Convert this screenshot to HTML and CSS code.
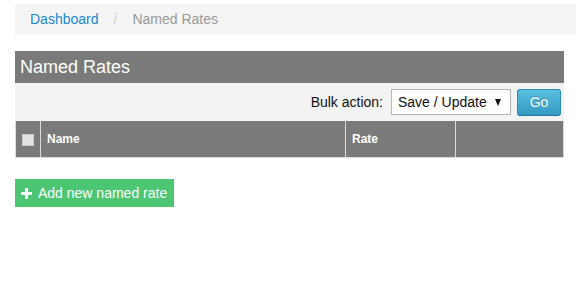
FILE: index.html
```html
<!DOCTYPE html>
<html>
<head>
  <title>Named Rates</title>
  <link rel="stylesheet" href="styles.css">
</head>
<body>

<div class="page">
  <ul class="breadcrumb">
    <li><a href="#">Dashboard</a></li>
    <li class="divider">/</li>
    <li class="active">Named Rates</li>
  </ul>

  <div class="panel">
    <h2 class="panel-title">Named Rates</h2>

    <div class="toolbar">
      <label for="bulkAction">Bulk action:</label>
      <div class="select-wrap">
        <select id="bulkAction">
          <option>Save / Update</option>
          <option>Delete</option>
        </select>
      </div>
      <button class="btn-go">Go</button>
    </div>

    <table class="rates">
      <thead>
        <tr>
          <th class="col-check"><span class="check"></span></th>
          <th class="col-name">Name</th>
          <th class="col-rate">Rate</th>
          <th class="col-actions"></th>
        </tr>
      </thead>
    </table>
  </div>

  <button class="btn-add">
    <svg width="11" height="11" viewBox="0 0 11 11"><path d="M4 0h3v4h4v3H7v4H4V7H0V4h4z" fill="#fff"/></svg>
    Add new named rate
  </button>
</div>

</body>
</html>
```

FILE: styles.css
```css
body {
  margin: 0;
  font-family: 'Liberation Sans', Arial, sans-serif;
  font-size: 14px;
  color: #222;
  background: #fff;
  overflow: hidden;
}
.page {
  padding: 4px 0 0 15px;
}
.breadcrumb {
  list-style: none;
  margin: 0;
  padding: 6px 15px;
  line-height: 19px;
  background-color: #f5f5f5;
  display: flex;
}
.breadcrumb a {
  color: #1a88cf;
  text-decoration: none;
}
.breadcrumb .divider {
  color: #ccc;
  padding: 0 15px 0 15px;
}
.breadcrumb .active {
  color: #999;
}
.panel {
  margin: 16px 12px 0 0;
}
.panel-title {
  margin: 0;
  background-color: #7a7a7a;
  color: #fff;
  font-size: 18px;
  font-weight: normal;
  line-height: 32px;
  padding-left: 5px;
}
.toolbar {
  background-color: #f3f3f3;
  height: 38px;
  display: flex;
  align-items: center;
  justify-content: flex-end;
  padding-right: 3px;
}
.toolbar label {
  margin-right: 8px;
  color: #111;
}
.select-wrap {
  position: relative;
}
.select-wrap select {
  appearance: none;
  -webkit-appearance: none;
  width: 120px;
  height: 26px;
  border: 1px solid #b5b5b5;
  border-radius: 0;
  background: #fff;
  font-family: inherit;
  font-size: 14px;
  color: #111;
  padding: 0 0 0 6px;
  margin: 0;
}
.select-wrap::after {
  content: "";
  position: absolute;
  right: 10px;
  top: 10px;
  border-left: 3.5px solid transparent;
  border-right: 3.5px solid transparent;
  border-top: 7px solid #111;
  pointer-events: none;
}
.btn-go {
  margin-left: 6px;
  width: 44px;
  height: 27px;
  border: 1px solid #2d8db0;
  border-bottom-color: #237a9a;
  border-radius: 3px;
  background: linear-gradient(#5ac0e0, #3399c0);
  color: #fff;
  font-family: inherit;
  font-size: 14px;
  text-shadow: 0 -1px 0 rgba(0, 0, 0, 0.2);
  cursor: pointer;
}
.rates {
  width: 100%;
  border-collapse: collapse;
}
.rates th {
  background-color: #7a7a7a;
  color: #fff;
  font-size: 12px;
  font-weight: bold;
  text-align: left;
  height: 36px;
  padding: 0 6px;
  border: 1px solid #dcdcdc;
  border-top: none;
}
.rates .col-check {
  width: 11px;
}
.rates .col-name {
  width: 292px;
}
.rates .col-rate {
  width: 97px;
}
.check {
  display: block;
  width: 10px;
  height: 10px;
  background-color: #e2e2e2;
  border: 1px solid #c8c8c8;
  margin-top: 1px;
}
.btn-add {
  margin-top: 21px;
  height: 28px;
  padding: 0 7px 0 6px;
  background-color: #4cc673;
  border: none;
  color: #fff;
  font-family: inherit;
  font-size: 14px;
  display: flex;
  align-items: center;
  gap: 6px;
  cursor: pointer;
}
```
